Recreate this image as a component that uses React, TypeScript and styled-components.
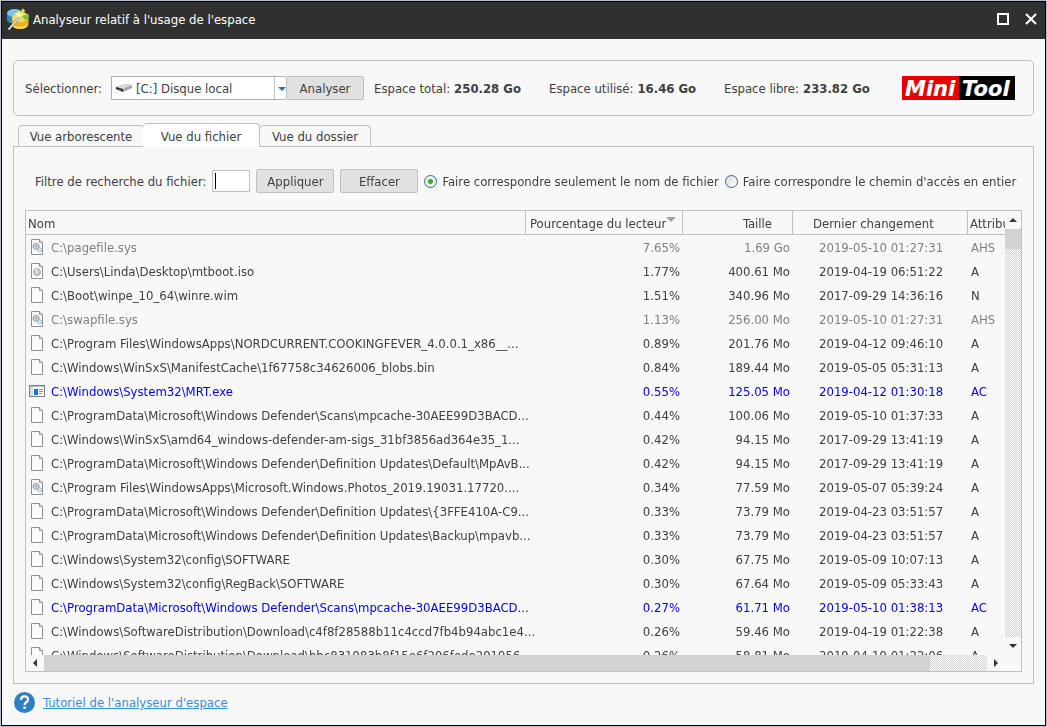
import React from "react";
import styled, { createGlobalStyle, css } from "styled-components";

const Global = createGlobalStyle`
  *, *::before, *::after { box-sizing: border-box; }
  body { margin: 0; background: #b7bccb; }
  body, button, input, select {
    font-family: "DejaVu Sans Condensed", "DejaVu Sans", sans-serif;
    font-size: 13px;
    line-height: 16px;
    color: #404040;
  }
`;

const Frame = styled.div`
  display: flex;
  flex-direction: column;
  height: 100vh;
  padding: 1px;
`;

const Window = styled.div`
  flex: 1;
  min-height: 0;
  display: flex;
  flex-direction: column;
  border: 1px solid #000010;
  background: #f8f8f8;
`;

const TitleBar = styled.header`
  display: flex;
  align-items: center;
  height: 37px;
  padding: 0 8px 3px 5px;
  gap: 4px;
  background: #303030;
  color: #fff;
`;

const Title = styled.h1`
  flex: 1;
  margin: 0;
  padding-top: 2px;
  font-size: 13px;
  font-weight: normal;
`;

const CaptionButton = styled.button`
  display: flex;
  padding: 0;
  border: 0;
  background: none;
  margin-left: 12px;
`;

const Body = styled.main`
  flex: 1;
  min-height: 0;
  display: flex;
  flex-direction: column;
  padding: 21px 11px 0;
`;

const Summary = styled.section`
  display: flex;
  align-items: center;
  height: 56px;
  padding: 0 18px 0 11px;
  border: 1px solid #c0c0c0;
  border-radius: 5px;
  white-space: nowrap;
`;

const DriveLabel = styled.label`
  width: 86px;
  padding-top: 2px;
`;

const SelectBox = styled.div`
  position: relative;
  width: 175px;
  height: 24px;
  border: 1px solid #b0b0b0;
  border-right: 0;
  background: #fff;
`;

const Select = styled.select`
  appearance: none;
  width: 100%;
  height: 22px;
  padding: 2px 16px 0 24px;
  border: 0;
  background: transparent;
`;

const DiskIcon = styled.svg`
  position: absolute;
  left: 4px;
  top: 6px;
`;

const SelectArrow = styled.svg`
  position: absolute;
  right: 0;
  top: 0;
  pointer-events: none;
`;

const Button = styled.button`
  width: 78px;
  height: 24px;
  padding: 2px 0 0;
  border: 1px solid #c0c0c0;
  border-radius: 2px;
  background: #e1e1e1;
`;

const Facts = styled.dl`
  display: flex;
  margin: 0 0 0 10px;
  padding-top: 2px;
`;

const Fact = styled.div`
  display: flex;
  gap: 4px;
  width: 175px;
`;

const FactValue = styled.dd`
  margin: 0;
  font-weight: bold;
`;

const Logo = styled.svg`
  margin-left: auto;
`;

const Tabs = styled.div`
  display: flex;
  align-items: flex-end;
  height: 30px;
  padding-left: 5px;
`;

const Tab = styled.button<{ $active?: boolean; $width: number }>`
  width: ${(p) => p.$width}px;
  height: 21px;
  margin: 0;
  padding: 2px 0 0;
  border: 1px solid #c0c0c0;
  border-bottom: 0;
  border-radius: 4px 4px 0 0;
  background: #f8f8f8;
  & + & { border-left: 0; }
  ${(p) =>
    p.$active &&
    css`
      position: relative;
      height: 24px;
      margin: 0 0 -1px -1px;
      background: #fff;
      && { border-left: 1px solid #c0c0c0; }
    `}
`;

const TabPanel = styled.section`
  flex: 1;
  min-height: 0;
  display: flex;
  flex-direction: column;
  gap: 17px;
  padding: 22px 11px 11px;
  border: 1px solid #c0c0c0;
`;

const Filter = styled.form`
  display: flex;
  align-items: center;
  gap: 6px;
  padding-left: 10px;
  white-space: nowrap;
`;

const FilterInput = styled.input`
  width: 38px;
  height: 22px;
  padding: 0 2px;
  border: 1px solid #c0c0c0;
  background: linear-gradient(#000, #000) 2px 2px / 1px 16px no-repeat #fff;
  caret-color: transparent;
  outline: none;
`;

const FilterLabel = styled.label`
  padding-top: 2px;
`;

const RadioLabel = styled.label`
  display: flex;
  align-items: center;
  gap: 5px;
`;

const RadioText = styled.span`
  padding-top: 2px;
`;

const Radio = styled.input`
  appearance: none;
  width: 13px;
  height: 13px;
  margin: 0;
  border: 1px solid #33608f;
  border-radius: 50%;
  background: linear-gradient(135deg, #dcdcd8, #fff);
  &:checked {
    background: radial-gradient(circle, #35b025 0 2px, #e4ebe2 3px, #f4f4f2 5px);
  }
`;

const List = styled.div`
  flex: 1;
  min-height: 0;
  display: grid;
  grid-template-columns: minmax(0, 1fr) 16px;
  grid-template-rows: minmax(0, 1fr) 16px;
  border: 1px solid #c0c0c0;
`;

const Viewport = styled.div`
  overflow: hidden;
`;

const Table = styled.table`
  width: 100%;
  table-layout: fixed;
  border-collapse: separate;
  border-spacing: 0;
`;

const Col = styled.col<{ $width?: number }>`
  width: ${(p) => (p.$width ? `${p.$width}px` : "auto")};
`;

type Align = "left" | "right";

const cell = css<{ $align?: Align; $pad: number }>`
  height: 24px;
  padding: 2px ${(p) => (p.$align === "right" ? p.$pad : 0)}px 0 ${(p) => (p.$align === "right" ? 0 : p.$pad)}px;
  text-align: ${(p) => p.$align || "left"};
  white-space: nowrap;
`;

const Th = styled.th<{ $align?: Align; $pad: number }>`
  ${cell}
  border-right: 1px solid #c0c0c0;
  border-bottom: 1px solid #c0c0c0;
  font-weight: normal;
  overflow: hidden;
  &:last-child { border-right: 0; }
`;

const Td = styled.td<{ $align?: Align; $pad: number }>`
  ${cell}
`;

const SortArrow = styled.svg`
  vertical-align: 6px;
`;

const tones = { normal: "#404040", system: "#808080", compressed: "#0000f0" };

const Row = styled.tr<{ $tone: keyof typeof tones }>`
  color: ${(p) => tones[p.$tone]};
`;

const FileCell = styled.div`
  display: flex;
  align-items: center;
  gap: 6px;
  height: 16px;
  & > svg {
    flex: none;
    margin-top: -2px;
  }
`;

const ScrollColumn = styled.div`
  display: flex;
  flex-direction: column;
`;

const ScrollRow = styled.div`
  grid-column: 1 / -1;
  display: flex;
  padding-right: 16px;
`;

const ScrollButton = styled.button<{ $vertical?: boolean }>`
  display: flex;
  align-items: center;
  justify-content: center;
  flex: none;
  width: ${(p) => (p.$vertical ? 16 : 18)}px;
  height: ${(p) => (p.$vertical ? 18 : 16)}px;
  padding: 0;
  border: 0;
  background: #f8f8f8;
`;

const Track = styled.div<{ $vertical?: boolean }>`
  flex: 1;
  display: flex;
  flex-direction: ${(p) => (p.$vertical ? "column" : "row")};
  background: repeating-conic-gradient(#d3d3d3 0 25%, #fcfcfc 0 50%) 0 0 / 2px 2px;
`;

const Thumb = styled.div<{ $size: string; $vertical?: boolean }>`
  flex: none;
  ${(p) => (p.$vertical ? "height" : "width")}: ${(p) => p.$size};
  background: #d2d2d2;
`;

const Footer = styled.footer`
  display: flex;
  align-items: center;
  gap: 8px;
  height: 41px;
  padding: 0 12px 5px;
  flex: none;
`;

const HelpLink = styled.a`
  padding-top: 2px;
  color: #3a8ee0;
  text-decoration: underline;
`;

type Kind = "page" | "gears" | "disc" | "exe";
type FileRow = [Kind, string, string, string, string, string];

const files: FileRow[] = [
  ["gears", "C:\\pagefile.sys", "7.65%", "1.69 Go", "2019-05-10 01:27:31", "AHS"],
  ["disc", "C:\\Users\\Linda\\Desktop\\mtboot.iso", "1.77%", "400.61 Mo", "2019-04-19 06:51:22", "A"],
  ["page", "C:\\Boot\\winpe_10_64\\winre.wim", "1.51%", "340.96 Mo", "2017-09-29 14:36:16", "N"],
  ["gears", "C:\\swapfile.sys", "1.13%", "256.00 Mo", "2019-05-10 01:27:31", "AHS"],
  ["page", "C:\\Program Files\\WindowsApps\\NORDCURRENT.COOKINGFEVER_4.0.0.1_x86__...", "0.89%", "201.76 Mo", "2019-04-12 09:46:10", "A"],
  ["page", "C:\\Windows\\WinSxS\\ManifestCache\\1f67758c34626006_blobs.bin", "0.84%", "189.44 Mo", "2019-05-05 05:31:13", "A"],
  ["exe", "C:\\Windows\\System32\\MRT.exe", "0.55%", "125.05 Mo", "2019-04-12 01:30:18", "AC"],
  ["page", "C:\\ProgramData\\Microsoft\\Windows Defender\\Scans\\mpcache-30AEE99D3BACD...", "0.44%", "100.06 Mo", "2019-05-10 01:37:33", "A"],
  ["page", "C:\\Windows\\WinSxS\\amd64_windows-defender-am-sigs_31bf3856ad364e35_1...", "0.42%", "94.15 Mo", "2017-09-29 13:41:19", "A"],
  ["page", "C:\\ProgramData\\Microsoft\\Windows Defender\\Definition Updates\\Default\\MpAvB...", "0.42%", "94.15 Mo", "2017-09-29 13:41:19", "A"],
  ["gears", "C:\\Program Files\\WindowsApps\\Microsoft.Windows.Photos_2019.19031.17720....", "0.34%", "77.59 Mo", "2019-05-07 05:39:24", "A"],
  ["page", "C:\\ProgramData\\Microsoft\\Windows Defender\\Definition Updates\\{3FFE410A-C9...", "0.33%", "73.79 Mo", "2019-04-23 03:51:57", "A"],
  ["page", "C:\\ProgramData\\Microsoft\\Windows Defender\\Definition Updates\\Backup\\mpavb...", "0.33%", "73.79 Mo", "2019-04-23 03:51:57", "A"],
  ["page", "C:\\Windows\\System32\\config\\SOFTWARE", "0.30%", "67.75 Mo", "2019-05-09 10:07:13", "A"],
  ["page", "C:\\Windows\\System32\\config\\RegBack\\SOFTWARE", "0.30%", "67.64 Mo", "2019-05-09 05:33:43", "A"],
  ["page", "C:\\ProgramData\\Microsoft\\Windows Defender\\Scans\\mpcache-30AEE99D3BACD...", "0.27%", "61.71 Mo", "2019-05-10 01:38:13", "AC"],
  ["page", "C:\\Windows\\SoftwareDistribution\\Download\\c4f8f28588b11c4ccd7fb4b94abc1e4...", "0.26%", "59.46 Mo", "2019-04-19 01:22:38", "A"],
  ["page", "C:\\Windows\\SoftwareDistribution\\Download\\bbc831983b8f15e6f296fede291956...", "0.26%", "58.81 Mo", "2019-04-19 01:22:06", "A"],
];

const toneOf = (attributes: string): keyof typeof tones =>
  attributes === "AHS" ? "system" : attributes === "AC" ? "compressed" : "normal";

function FileIcon({ kind }: { kind: Kind }) {
  if (kind === "exe") {
    return (
      <svg width="16" height="16" viewBox="0 0 16 16" shapeRendering="crispEdges" aria-hidden="true">
        <rect x="0.5" y="2.5" width="15" height="11" fill="#fff" stroke="#7a7d80" />
        <path d="M1 3h14v1H1z" fill="#b9bcc0" />
        <path d="M1 4h3v9H1z" fill="#dcdee0" />
        <path d="M5 6h4v6H5z" fill="#0a78d7" />
        <path d="M10 6h4v1h-4zM10 8h4v1h-4zM10 10h3v1h-3z" fill="#8b9096" />
      </svg>
    );
  }
  return (
    <svg width="16" height="16" viewBox="0 0 16 16" aria-hidden="true">
      <path d="M2.5 0.5h8l3 3v12h-11z" fill="#fbfcfc" stroke="#8c8f91" />
      <path d="M10.5 0.5v3h3" fill="#eee" stroke="#8c8f91" />
      {kind === "disc" && (
        <>
          <circle cx="8" cy="9" r="3.6" fill="#c4c6c7" stroke="#a0a2a3" strokeWidth="0.8" />
          <path d="M8 9L5.500 6.500A3.500 3.500 0 0 1 8 5.500z" fill="#e6e8e8" />
          <circle cx="8" cy="9" r="1.2" fill="#e2e4e4" />
        </>
      )}
      {kind === "gears" && (
        <>
          <circle cx="7" cy="7.5" r="2.8" fill="#e4e6e7" stroke="#85898c" strokeWidth="1.4" strokeDasharray="1.2 0.6" />
          <circle cx="7" cy="7.5" r="1" fill="#7d8184" />
          <circle cx="10.8" cy="11" r="2" fill="#e5f2fa" stroke="#82b0cf" strokeWidth="1.2" strokeDasharray="1 0.5" />
        </>
      )}
    </svg>
  );
}

function AppIcon() {
  return (
    <svg width="22" height="23" viewBox="0 0 22 23" aria-hidden="true">
      <path d="M0 5.500v6.500c0 2 3 3.500 7 3.500V5z" fill="#2c86c4" />
      <ellipse cx="7.500" cy="5" rx="7.500" ry="4" fill="#7cc4ea" />
      <path d="M5 11v6c0 2.500 4 4 8 4 5 0 8.500-2 8.500-5V6z" fill="#e3b424" />
      <path d="M5 11c0-4 4-7 9-7 4.500 0 7.500 2.500 7.500 5 0 3-4 5-9 5-4 0-7.500-1-7.500-3z" fill="#f5dc5c" />
      <path d="M15 8.500l6-3c1 2.500.6 5-2 7z" fill="#7fb848" />
      <path d="M6 16.500c2 2.500 8 3.500 14 .5v1.500c-4 3-11 3-14-.5z" fill="#f6e27a" />
      <path d="M1.500 21.500L13 8.500" stroke="#6b6b6b" strokeWidth="2.400" />
      <path d="M1.500 21.500L13 8.500" stroke="#eee" strokeWidth="1.300" />
      <path d="M12 2l1.300 2.700L16 5l-2 2 .5 2.700L12 8.500 9.500 9.700 10 7 8 5l2.700-.3z" fill="#fdf2b0" />
      <path d="M16 0l.8 1.700 1.700.2-1.200 1.300.3 1.800L16 4.200l-1.600.8.300-1.800L13.500 1.900l1.700-.2z" fill="#f8d94c" />
    </svg>
  );
}

export default function App() {
  return (
    <>
      <Global />
      <Frame>
        <Window>
          <TitleBar>
            <AppIcon />
            <Title>Analyseur relatif à l'usage de l'espace</Title>
            <CaptionButton aria-label="Agrandir">
              <svg width="12" height="12" aria-hidden="true">
                <path d="M1 1h10v10H1z" fill="none" stroke="#fff" strokeWidth="2" />
              </svg>
            </CaptionButton>
            <CaptionButton aria-label="Fermer">
              <svg width="12" height="12" aria-hidden="true">
                <path d="M1 1l10 10M11 1L1 11" stroke="#fff" strokeWidth="2" />
              </svg>
            </CaptionButton>
          </TitleBar>
          <Body>
            <Summary>
              <DriveLabel htmlFor="drive">Sélectionner:</DriveLabel>
              <SelectBox>
                <DiskIcon width="17" height="10" viewBox="0 0 17 10" aria-hidden="true">
                  <path d="M0 4l9-3 7 1v3L7 9 0 6z" fill="#a4a4a4" />
                  <path d="M0 4l9-3 7 1-9 4z" fill="#dadada" />
                  <path d="M0 4l7 2v3L0 6z" fill="#2c2c2c" />
                  <path d="M3 6h2v1H3z" fill="#4d9a3e" />
                </DiskIcon>
                <Select id="drive" defaultValue="c">
                  <option value="c">[C:] Disque local</option>
                </Select>
                <SelectArrow width="12" height="22" aria-hidden="true">
                  <path d="M0.5 0v22" stroke="#c0c0c0" />
                  <path d="M4 10h8l-4 4z" fill="#1f78c8" />
                </SelectArrow>
              </SelectBox>
              <Button type="button">Analyser</Button>
              <Facts>
                <Fact><dt>Espace total:</dt><FactValue>250.28 Go</FactValue></Fact>
                <Fact><dt>Espace utilisé:</dt><FactValue>16.46 Go</FactValue></Fact>
                <Fact><dt>Espace libre:</dt><FactValue>233.82 Go</FactValue></Fact>
              </Facts>
              <Logo width="113" height="24" role="img" aria-label="MiniTool">
                <rect width="57" height="24" fill="#e60000" />
                <rect x="57" width="56" height="24" fill="#000" />
                <g fontFamily="DejaVu Sans" fontWeight="bold" fontStyle="italic" fontSize="21" fill="#fff" stroke="#fff" strokeWidth="0.2">
                  <text x="3" y="20">Mini</text>
                  <text x="60" y="20">Tool</text>
                </g>
              </Logo>
            </Summary>
            <Tabs role="tablist">
              <Tab role="tab" $width={126}>Vue arborescente</Tab>
              <Tab role="tab" aria-selected="true" $active $width={117}>Vue du fichier</Tab>
              <Tab role="tab" $width={111}>Vue du dossier</Tab>
            </Tabs>
            <TabPanel role="tabpanel">
              <Filter>
                <FilterLabel htmlFor="filter">Filtre de recherche du fichier:</FilterLabel>
                <FilterInput id="filter" type="text" autoFocus />
                <Button type="button">Appliquer</Button>
                <Button type="button">Effacer</Button>
                <RadioLabel>
                  <Radio type="radio" name="match" defaultChecked />
                  <RadioText>Faire correspondre seulement le nom de fichier</RadioText>
                </RadioLabel>
                <RadioLabel>
                  <Radio type="radio" name="match" />
                  <RadioText>Faire correspondre le chemin d'accès en entier</RadioText>
                </RadioLabel>
              </Filter>
              <List>
                <Viewport>
                  <Table>
                    <colgroup>
                      <Col />
                      <Col $width={157} />
                      <Col $width={110} />
                      <Col $width={175} />
                      <Col $width={37} />
                    </colgroup>
                    <thead>
                      <tr>
                        <Th $pad={2}>Nom</Th>
                        <Th $pad={4}>
                          Pourcentage du lecteur
                          <SortArrow width="10" height="5" aria-hidden="true">
                            <path d="M0 0h10L5 5z" fill="#a0a0a0" />
                          </SortArrow>
                        </Th>
                        <Th $align="right" $pad={20}>Taille</Th>
                        <Th $pad={20}>Dernier changement</Th>
                        <Th $pad={2}>Attributs</Th>
                      </tr>
                    </thead>
                    <tbody>
                      {files.map(([kind, name, share, size, date, attributes]) => (
                        <Row key={name + share} $tone={toneOf(attributes)}>
                          <Td $pad={3}><FileCell><FileIcon kind={kind} />{name}</FileCell></Td>
                          <Td $align="right" $pad={3}>{share}</Td>
                          <Td $align="right" $pad={3}>{size}</Td>
                          <Td $pad={26}>{date}</Td>
                          <Td $pad={3}>{attributes}</Td>
                        </Row>
                      ))}
                    </tbody>
                  </Table>
                </Viewport>
                <ScrollColumn>
                  <ScrollButton $vertical type="button" aria-label="Défiler vers le haut">
                    <svg width="8" height="4" aria-hidden="true"><path d="M0 4l4-4 4 4z" fill="#333" /></svg>
                  </ScrollButton>
                  <Track $vertical><Thumb $vertical $size="20px" /></Track>
                  <ScrollButton $vertical type="button" aria-label="Défiler vers le bas">
                    <svg width="8" height="4" aria-hidden="true"><path d="M0 0l4 4 4-4z" fill="#333" /></svg>
                  </ScrollButton>
                </ScrollColumn>
                <ScrollRow>
                  <ScrollButton type="button" aria-label="Défiler vers la gauche">
                    <svg width="4" height="8" aria-hidden="true"><path d="M4 0L0 4l4 4z" fill="#333" /></svg>
                  </ScrollButton>
                  <Track><Thumb $size="94%" /></Track>
                  <ScrollButton type="button" aria-label="Défiler vers la droite">
                    <svg width="4" height="8" aria-hidden="true"><path d="M0 0l4 4-4 4z" fill="#333" /></svg>
                  </ScrollButton>
                </ScrollRow>
              </List>
            </TabPanel>
          </Body>
          <Footer>
            <svg width="21" height="21" viewBox="0 0 21 21" aria-hidden="true">
              <circle cx="10.5" cy="10.5" r="10.5" fill="#2f80c4" />
              <path d="M7 8q0-3.6 3.6-3.6T14 7.6q0 1.600-1.800 2.700Q10.600 11.200 10.600 13" fill="none" stroke="#fff" strokeWidth="2.200" />
              <rect x="9.400" y="14.500" width="2.400" height="2.400" fill="#fff" />
            </svg>
            <HelpLink href="#tutoriel">Tutoriel de l'analyseur d'espace</HelpLink>
          </Footer>
        </Window>
      </Frame>
    </>
  );
}
